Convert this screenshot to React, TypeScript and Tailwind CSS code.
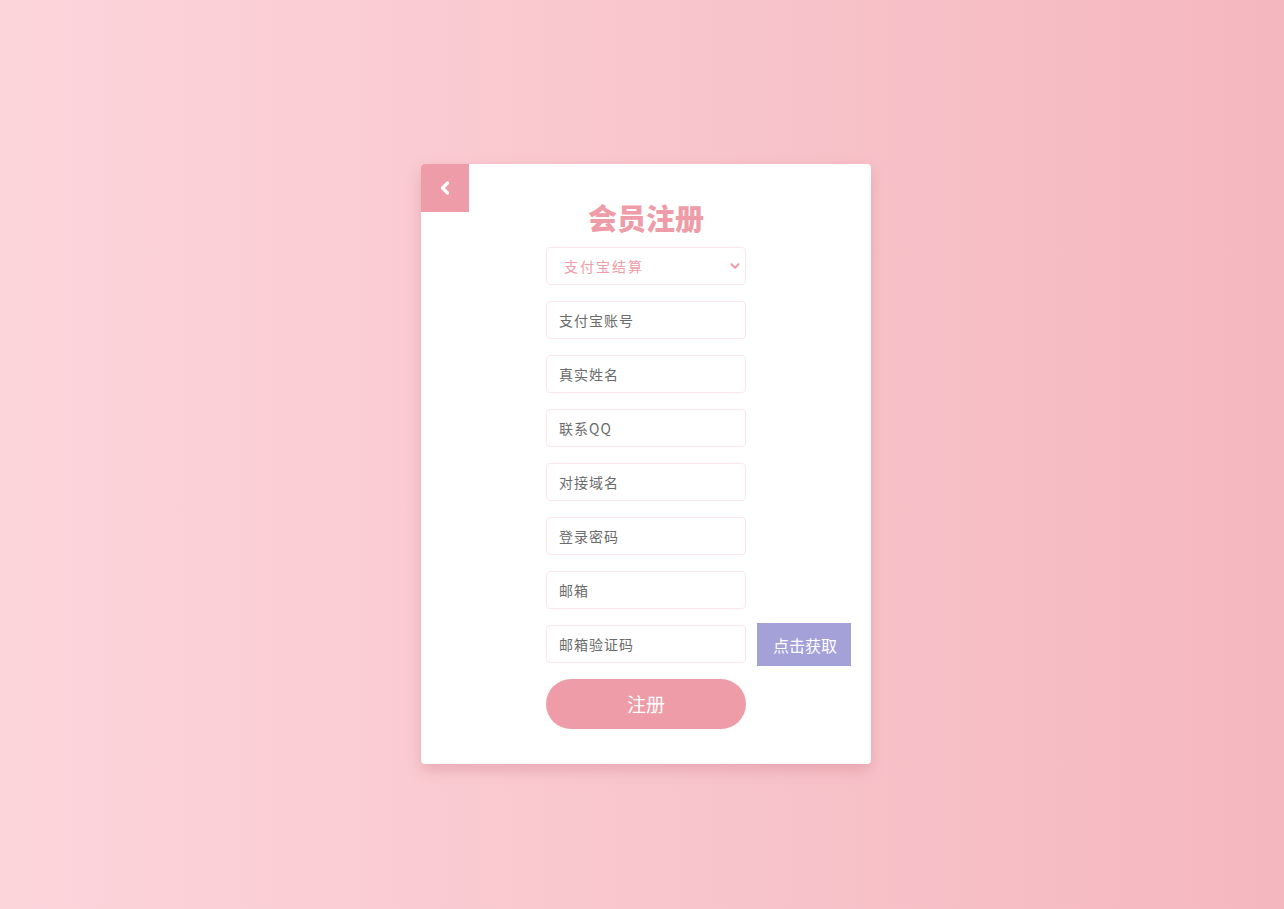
import { ChevronDownIcon, ChevronLeftIcon } from "lucide-react";

const FIELDS = [
  "支付宝账号",
  "真实姓名",
  "联系QQ",
  "对接域名",
  "登录密码",
  "邮箱",
];

const FONT = "font-['Noto_Sans_CJK_SC','Noto_Sans',sans-serif]";

const Field = ({ placeholder }: { placeholder: string }) => (
  <input
    className="h-[38px] w-[200px] rounded-[4px] border border-[#fde6ea] bg-white px-3 text-[14px] tracking-[1px] text-[#555] outline-none placeholder:text-[#6b6b6b]"
    placeholder={placeholder}
    type="text"
  />
);

export default function App() {
  return (
    <div
      className={`flex min-h-[909px] w-full items-start justify-center bg-gradient-to-r from-[#fcd5db] to-[#f5b7bf] pt-[164px] pl-[8px] ${FONT}`}
    >
      <div className="relative flex h-[600px] w-[450px] flex-col items-center rounded-[4px] bg-white pt-[35px] shadow-[0_6px_14px_rgba(210,130,145,0.45)]">
        <button className="absolute top-0 left-0 flex h-[48px] w-[48px] items-center justify-center rounded-tl-[4px] bg-[#ee9ca7] text-white">
          <ChevronLeftIcon className="size-5" strokeWidth={4} />
        </button>

        <h1 className="text-[29px] leading-[37px] font-black text-[#ee9ca7]">
          会员注册
        </h1>

        <div className="mt-[11px] flex flex-col gap-4">
          <div className="relative h-[38px] w-[200px]">
            <select className="h-full w-full appearance-none rounded-[4px] border border-[#fde6ea] bg-white px-[17px] text-[14px] tracking-[2px] text-[#ee9ca7] outline-none">
              <option>支付宝结算</option>
            </select>
            <ChevronDownIcon
              className="pointer-events-none absolute top-1/2 right-[4px] size-[14px] -translate-y-1/2 text-[#ee9ca7]"
              strokeWidth={3.5}
            />
          </div>

          {FIELDS.map((label) => (
            <Field key={label} placeholder={label} />
          ))}

          <div className="relative">
            <Field placeholder="邮箱验证码" />
            <button className="absolute top-[-2px] left-[211px] flex h-[43px] w-[94px] items-center justify-center bg-[#a4a0d8] pl-[2px] text-[16px] text-white">
              点击获取
            </button>
          </div>
        </div>

        <button className="mt-4 h-[50px] w-[200px] rounded-full bg-[#ee9ca7] text-[19px] text-white">
          注册
        </button>
      </div>
    </div>
  );
}
